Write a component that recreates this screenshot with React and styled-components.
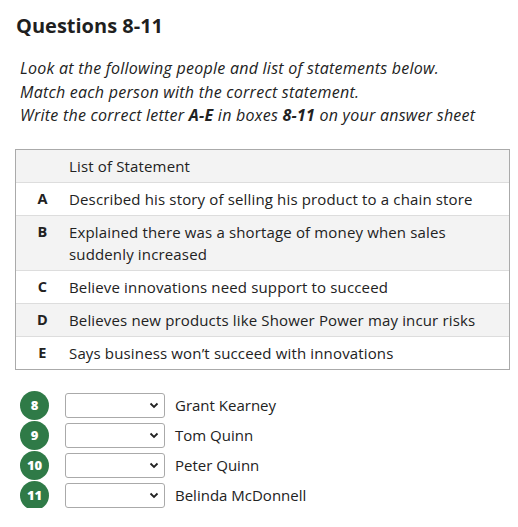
import React from "react";
import styled, { createGlobalStyle } from "styled-components";

const GlobalStyle = createGlobalStyle`
  body {
    margin: 0;
    background: #fff;
    color: #222;
    font-family: "Open Sans", "Noto Sans", sans-serif;
  }
`;

const Page = styled.div`
  padding: 13px 8px 0 15px;
`;

const Title = styled.h2`
  margin: 0 0 0 1px;
  font-family: "Open Sans", "Noto Sans", sans-serif;
  font-weight: 700;
  font-size: 20px;
  line-height: 26px;
  color: #1f1f1f;
`;

const Instructions = styled.div`
  margin: 18px 0 21px 5px;
  font-style: italic;
  font-size: 16px;
  letter-spacing: 0.25px;
  line-height: 23.5px;
  color: #222;

  b {
    font-weight: 700;
  }
`;

const Table = styled.div`
  border: 1px solid #aaa;
  width: 493px;
`;

const Row = styled.div`
  display: flex;
  align-items: flex-start;
  background: ${(p) => (p.$shaded ? "#f3f3f3" : "#fff")};
  border-top: ${(p) => (p.$first ? "none" : "1px solid #ddd")};
  padding: 5px 0;
  font-size: 15px;
  letter-spacing: 0.15px;
  line-height: 22px;
`;

const Letter = styled.div`
  width: 53px;
  flex: none;
  text-align: center;
  font-family: "Open Sans", sans-serif;
  font-weight: 700;
  font-size: 14.5px;
`;

const Text = styled.div`
  flex: 1;
  padding-right: 10px;
`;

const Answers = styled.div`
  margin-top: 23px;
  display: flex;
  flex-direction: column;
  gap: 5px;
`;

const AnswerRow = styled.div`
  display: flex;
  align-items: center;
  height: 25px;
`;

const Num = styled.div`
  width: 29px;
  height: 29px;
  border-radius: 50%;
  background: #2f7a47;
  color: #fff;
  font-family: "Open Sans", sans-serif;
  font-weight: 800;
  font-size: 13px;
  display: flex;
  align-items: center;
  justify-content: center;
  margin-left: 5px;
  flex: none;
`;

const SelectBox = styled.div`
  position: relative;
  width: 100px;
  height: 25px;
  margin-left: 16px;
  box-sizing: border-box;
  border: 1px solid #aaa;
  border-radius: 3px;
  background: #fff;
`;

const Chevron = styled.svg`
  position: absolute;
  right: 5px;
  top: 8px;
`;

const Name = styled.span`
  margin-left: 10px;
  font-size: 15px;
`;

const statements = [
  ["A", "Described his story of selling his product to a chain store"],
  ["B", "Explained there was a shortage of money when sales suddenly increased"],
  ["C", "Believe innovations need support to succeed"],
  ["D", "Believes new products like Shower Power may incur risks"],
  ["E", "Says business won’t succeed with innovations"],
];

const people = [
  ["8", "Grant Kearney"],
  ["9", "Tom Quinn"],
  ["10", "Peter Quinn"],
  ["11", "Belinda McDonnell"],
];

export default function App() {
  return (
    <Page>
      <GlobalStyle />
      <Title>Questions 8-11</Title>
      <Instructions>
        Look at the following people and list of statements below.
        <br />
        Match each person with the correct statement.
        <br />
        Write the correct letter <b>A-E</b> in boxes <b>8-11</b> on your answer sheet
      </Instructions>

      <Table>
        <Row $first $shaded>
          <Letter />
          <Text>List of Statement</Text>
        </Row>
        {statements.map(([l, t], i) => (
          <Row key={l} $shaded={i % 2 === 1}>
            <Letter>{l}</Letter>
            <Text>{t}</Text>
          </Row>
        ))}
      </Table>

      <Answers>
        {people.map(([n, name]) => (
          <AnswerRow key={n}>
            <Num>{n}</Num>
            <SelectBox>
              <Chevron width="10" height="7" viewBox="0 0 10 7">
                <path d="M1.5 1.5 L5 5 L8.5 1.5" fill="none" stroke="#222" strokeWidth="1.8" />
              </Chevron>
            </SelectBox>
            <Name>{name}</Name>
          </AnswerRow>
        ))}
      </Answers>
    </Page>
  );
}
